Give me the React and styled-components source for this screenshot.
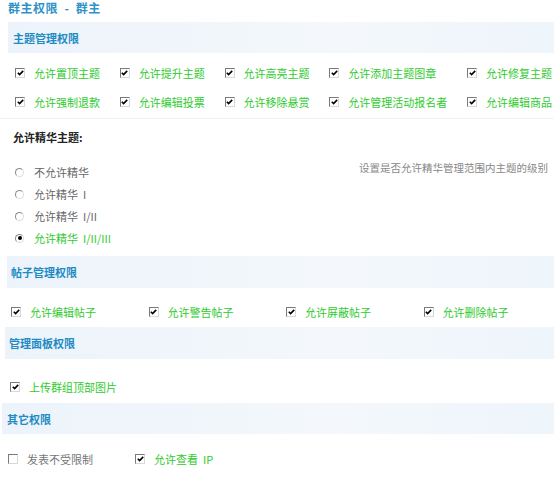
import React from 'react';
import styled, { createGlobalStyle } from 'styled-components';

const GlobalStyle = createGlobalStyle`
    html, body {
        margin: 0;
        padding: 0;
        background: #ffffff;
    }
    body {
        font-family: "Noto Sans CJK SC", "Noto Sans", sans-serif;
        font-size: 11px;
        color: #333333;
    }
`

const Page = styled.div`
    width: 554px;
    height: 481px;
    overflow: hidden;
`

const Title = styled.div`
    padding-left: 8px;
    line-height: 16px;
    font-size: 12px;
    font-weight: bold;
    letter-spacing: 0.5px;
    white-space: pre;
    color: #2f93c6;
    margin-bottom: 6px;
`

const SectionBar = styled.div`
    display: flex;
    align-items: center;
    height: ${p => p.$height || 31}px;
    margin-left: ${p => p.$inset}px;
    padding-left: ${p => p.$textInset}px;
    background: linear-gradient(to right, #ecf3fa, #f4f8fc 60%, #eef5fb);
    font-weight: bold;
    font-size: 11px;
    color: #1f8bc4;
`

const CheckGrid = styled.div`
    display: grid;
    grid-template-columns: ${p => p.$columns};
    justify-content: ${p => p.$justify || 'start'};
    row-gap: 9px;
    padding: ${p => p.$padding};
    border-bottom: ${p => (p.$line ? '1px solid #f1f3f5' : 'none')};
`

const Item = styled.label`
    display: flex;
    align-items: center;
    height: 20px;
    gap: 9px;
    white-space: pre;
    color: ${p => (p.$on ? '#2ecb2e' : '#777777')};
`

const Box = styled.span`
    display: inline-flex;
    align-items: center;
    justify-content: center;
    box-sizing: border-box;
    width: 10px;
    height: 10px;
    background: #ffffff;
    border-top: 1px solid #7a7a7a;
    border-left: 1px solid #7a7a7a;
    border-right: 1px solid #d8d8d8;
    border-bottom: 1px solid #d8d8d8;
    flex-shrink: 0;
`

const SubTitle = styled.div`
    padding-left: 13px;
    margin-top: 11px;
    line-height: 14px;
    font-weight: bold;
    color: #222222;
`

const DigestRow = styled.div`
    display: flex;
    justify-content: space-between;
    align-items: flex-start;
    padding: 17px 6px 0 15px;
    margin-bottom: 7px;
`

const RadioList = styled.div`
    display: flex;
    flex-direction: column;
`

const RadioItem = styled.label`
    display: flex;
    align-items: center;
    height: 22px;
    gap: 10px;
    white-space: pre;
    color: ${p => (p.$on ? '#2ecb2e' : '#666666')};
`

const Radio = styled.span`
    position: relative;
    box-sizing: border-box;
    width: 9px;
    height: 9px;
    border-radius: 50%;
    border: 1px solid;
    border-color: #8a8a8a #dddddd #dddddd #8a8a8a;
    background: #ffffff;

    &::after {
        content: '';
        display: ${p => (p.$on ? 'block' : 'none')};
        position: absolute;
        left: 1.5px;
        top: 1.5px;
        width: 4px;
        height: 4px;
        border-radius: 50%;
        background: #000000;
    }
`

const Hint = styled.div`
    line-height: 14px;
    font-size: 10.5px;
    color: #888888;
`

function Check({ on, children }) {
    return (
        <Item $on={on}>
            <Box>
                {on && (
                    <svg width="7" height="6" viewBox="0 0 7 6">
                        <path d="M0.8 2.8 L2.6 4.6 L6.2 0.9" fill="none" stroke="#000" strokeWidth="1.6" />
                    </svg>
                )}
            </Box>
            {children}
        </Item>
    )
}

const threadPerms = [
    '允许置顶主题', '允许提升主题', '允许高亮主题', '允许添加主题图章', '允许修复主题',
    '允许强制退款', '允许编辑投票', '允许移除悬赏', '允许管理活动报名者', '允许编辑商品',
]

const digestLevels = ['不允许精华', '允许精华  I', '允许精华  I/II', '允许精华  I/II/III']

const postPerms = ['允许编辑帖子', '允许警告帖子', '允许屏蔽帖子', '允许删除帖子']

export default function App() {
    return (
        <Page>
            <GlobalStyle />
            <Title>群主权限  -  群主</Title>

            <SectionBar $inset={8} $textInset={5}>主题管理权限</SectionBar>
            <CheckGrid $columns="repeat(5, auto)" $justify="space-between" $padding="10px 2px 6px 15px" $line>
                {threadPerms.map(t => <Check key={t} on>{t}</Check>)}
            </CheckGrid>

            <SubTitle>允许精华主题:</SubTitle>
            <DigestRow>
                <RadioList>
                    {digestLevels.map((t, i) => (
                        <RadioItem key={t} $on={i === 3}>
                            <Radio $on={i === 3} />
                            {t}
                        </RadioItem>
                    ))}
                </RadioList>
                <Hint>设置是否允许精华管理范围内主题的级别</Hint>
            </DigestRow>

            <SectionBar $inset={7} $textInset={4} $height={32}>帖子管理权限</SectionBar>
            <CheckGrid $columns="repeat(4, 137.5px)" $padding="14px 0 5px 11px">
                {postPerms.map(t => <Check key={t} on>{t}</Check>)}
            </CheckGrid>

            <SectionBar $inset={5} $textInset={4} $height={32}>管理面板权限</SectionBar>
            <CheckGrid $columns="auto" $padding="18px 0 6px 10px">
                <Check on>上传群组顶部图片</Check>
            </CheckGrid>

            <SectionBar $inset={2} $textInset={5}>其它权限</SectionBar>
            <CheckGrid $columns="127px 127px" $padding="15px 0 0 8px">
                <Check>发表不受限制</Check>
                <Check on>允许查看  IP</Check>
            </CheckGrid>
        </Page>
    )
}
